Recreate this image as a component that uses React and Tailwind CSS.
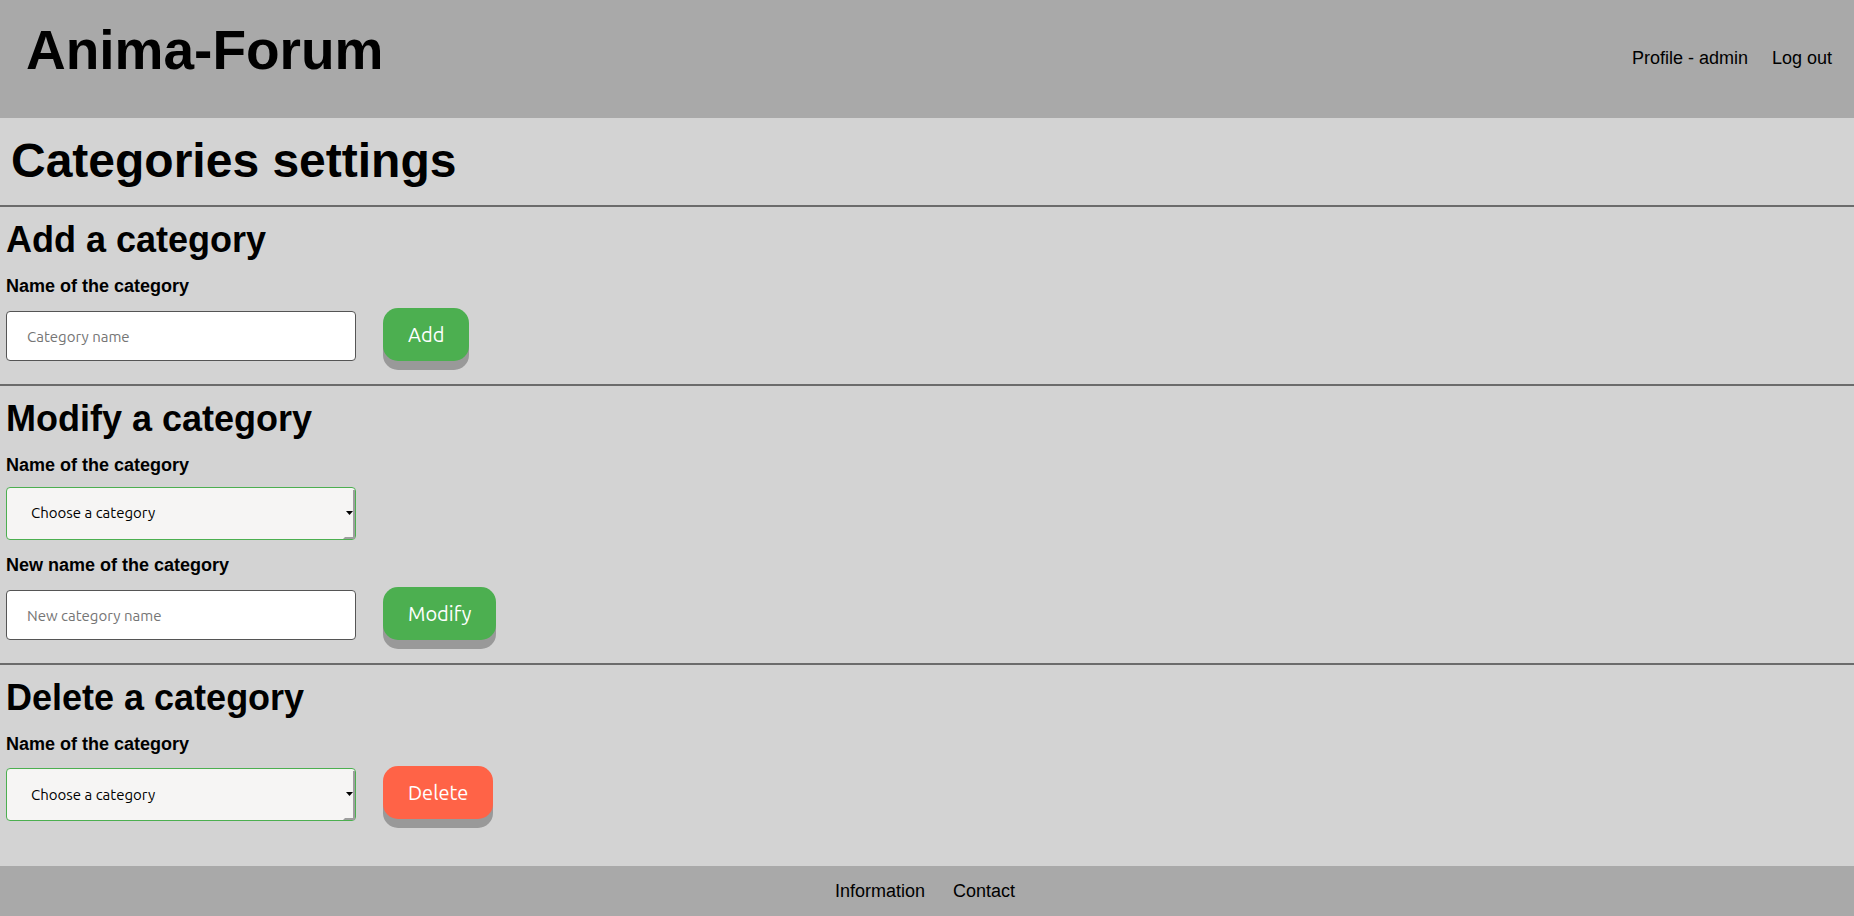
import { useId } from 'react'

const labelClass = 'block text-lg leading-5 font-bold'

function Heading({ children }) {
  return <h2 className="text-4xl leading-10 font-bold">{children}</h2>
}

function TextField({ id, placeholder }) {
  return (
    <input
      id={id}
      type="text"
      placeholder={placeholder}
      className="h-[50px] w-[350px] rounded border border-[#555] bg-white px-5 font-[Ubuntu,'Noto_Sans',sans-serif] text-[15px] placeholder:text-[#757575]"
    />
  )
}

function SelectField({ id }) {
  return (
    <div className="relative w-[350px]">
      <select
        id={id}
        className="block h-[53px] w-full appearance-none rounded border border-[#4caf50] bg-[#f6f5f4] px-6 font-[Ubuntu,'Noto_Sans',sans-serif] text-[15px]"
      >
        <option>Choose a category</option>
      </select>
      <svg
        className="pointer-events-none absolute top-0 right-0"
        width="14"
        height="53"
        viewBox="0 0 14 53"
        aria-hidden="true"
      >
        <path d="M11 3h2v48a1 1 0 0 1-1 1H1l2-2h8z" fill="#9e9e9e" />
        <path d="M4 24h7l-3.500 4z" fill="#000" />
      </svg>
    </div>
  )
}

function ActionButton({ danger, children }) {
  return (
    <button
      type="submit"
      className={`h-[53px] rounded-[15px] px-[25px] font-[Ubuntu,'Noto_Sans',sans-serif] text-xl font-normal text-white shadow-[0_9px_#999] ${
        danger ? 'bg-[#ff6347]' : 'bg-[#4caf50]'
      }`}
    >
      {children}
    </button>
  )
}

function Section({ title, children }) {
  return (
    <section className="border-t-2 border-[#6b6b6b] px-1.5 pt-[13px] pb-[23px]">
      <Heading>{title}</Heading>
      <form className="mt-4" onSubmit={(e) => e.preventDefault()}>
        {children}
      </form>
    </section>
  )
}

export default function App() {
  const id = useId()
  return (
    <div className="flex min-h-screen flex-col bg-[#d3d3d3] font-['Liberation_Sans',Arial,sans-serif] text-black">
      <header className="flex items-start justify-between bg-[#a9a9a9] pr-[22px] pb-9 pl-[26px]">
        <h1 className="pt-5 text-[55px] leading-[60px] font-bold">Anima-Forum</h1>
        <nav className="flex gap-6 pt-12 pb-[14px] text-lg leading-5">
          <a href="#profile">Profile - admin</a>
          <a href="#logout">Log out</a>
        </nav>
      </header>

      <main className="grow">
        <h1 className="px-[11px] pt-[15px] pb-[17px] text-5xl leading-[55px] font-bold">Categories settings</h1>

        <Section title="Add a category">
          <label htmlFor={`${id}-add`} className={labelClass}>Name of the category</label>
          <div className="mt-3 flex items-baseline gap-[27px]">
            <TextField id={`${id}-add`} placeholder="Category name" />
            <ActionButton>Add</ActionButton>
          </div>
        </Section>

        <Section title="Modify a category">
          <label htmlFor={`${id}-old`} className={labelClass}>Name of the category</label>
          <div className="mt-3">
            <SelectField id={`${id}-old`} />
          </div>
          <label htmlFor={`${id}-new`} className={`mt-[15px] ${labelClass}`}>New name of the category</label>
          <div className="mt-3 flex items-baseline gap-[27px]">
            <TextField id={`${id}-new`} placeholder="New category name" />
            <ActionButton>Modify</ActionButton>
          </div>
        </Section>

        <Section title="Delete a category">
          <label htmlFor={`${id}-del`} className={labelClass}>Name of the category</label>
          <div className="mt-3 flex items-baseline gap-[27px]">
            <SelectField id={`${id}-del`} />
            <ActionButton danger>Delete</ActionButton>
          </div>
        </Section>
      </main>

      <footer className="bg-[#a9a9a9] py-[15px]">
        <nav className="flex justify-center gap-7 pr-1 text-lg leading-5">
          <a href="#information">Information</a>
          <a href="#contact">Contact</a>
        </nav>
      </footer>
    </div>
  )
}
